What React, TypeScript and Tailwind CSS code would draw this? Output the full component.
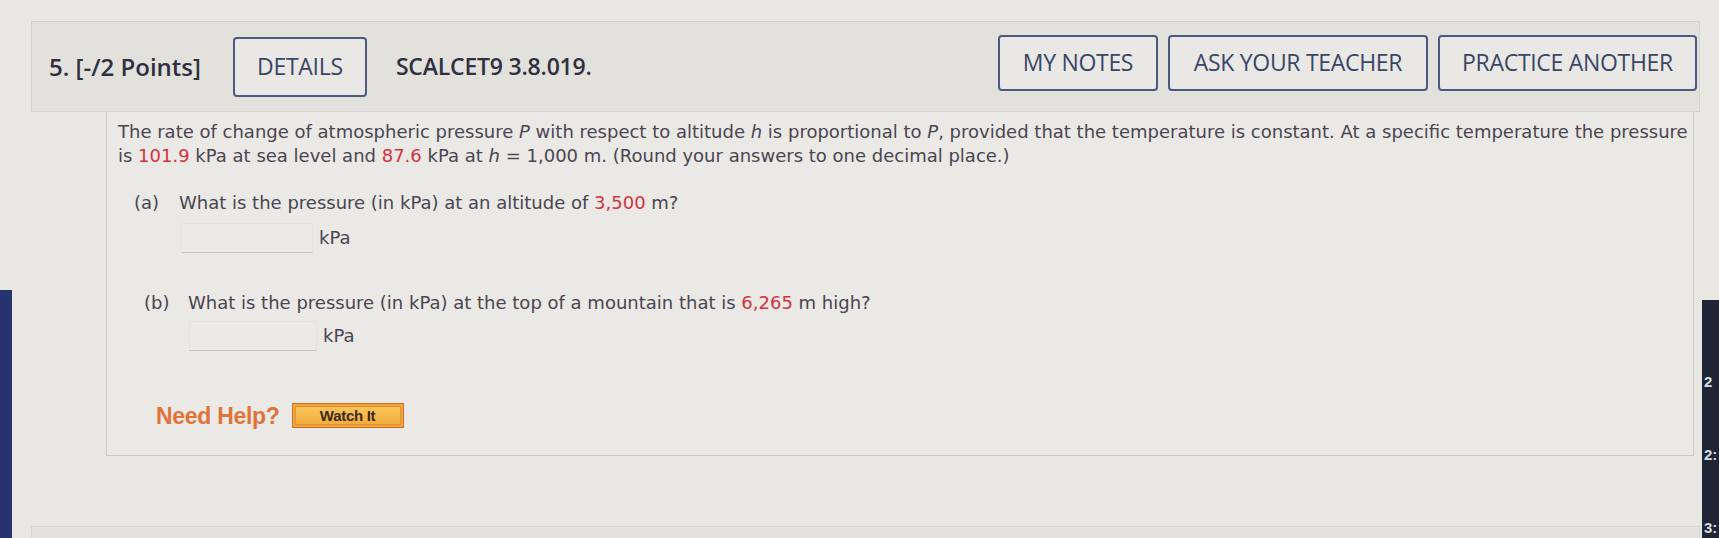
import React from 'react';

const red = 'text-[#d2333f]';

function OutlineButton({ label, className }: { label: string; className: string }) {
  return (
    <div
      className={`flex items-center justify-center rounded-[4px] border-2 border-[#4d5a80] bg-[#e9e8e5] text-[23px] tracking-[-0.3px] text-[#3a4666] ${className}`}
    >
      {label}
    </div>
  );
}

function AnswerRow({ pl, boxW, gap }: { pl: string; boxW: string; gap: string }) {
  return (
    <div className={`flex items-center ${pl} ${gap}`}>
      <div className={`h-[30px] ${boxW} border border-[#e4e3df] border-b-[#c6c5c1] bg-[#ebeae6]`} />
      <span>kPa</span>
    </div>
  );
}

export default function App() {
  return (
    <div className="flex h-[538px] w-[1719px] overflow-hidden bg-[#e9e7e2] font-['DejaVu_Sans',sans-serif]">
      {/* left edge of the monitor */}
      <div className="flex w-[12px] shrink-0 flex-col">
        <div className="h-[290px]" />
        <div className="flex-1 bg-[#26336e]" />
      </div>

      <div className="flex w-[1690px] shrink-0 flex-col pt-[21px] pl-[19px]">
        {/* header band */}
        <div className="flex h-[91px] w-[1669px] shrink-0 items-center border border-[#d3d2ce] bg-[#e2e1dc] pr-[2px] font-['Open_Sans',sans-serif] text-[#2f3040]">
          <span className="ml-[17px] text-[24px] font-semibold">5. [-/2 Points]</span>
          <OutlineButton label="DETAILS" className="ml-[32px] h-[60px] w-[134px]" />
          <span className="ml-[29px] text-[23px] font-semibold tracking-[-0.2px]">SCALCET9 3.8.019.</span>
          <div className="flex-1" />
          <div className="flex gap-[10px] pb-[8px]">
            <OutlineButton label="MY NOTES" className="h-[56px] w-[160px]" />
            <OutlineButton label="ASK YOUR TEACHER" className="h-[56px] w-[260px]" />
            <OutlineButton label="PRACTICE ANOTHER" className="h-[56px] w-[259px]" />
          </div>
        </div>

        {/* question panel */}
        <div className="ml-[75px] flex h-[344px] w-[1588px] shrink-0 flex-col border border-t-0 border-[#c9c8c4] bg-[#eae9e5] pt-[8px] pl-[11px] text-[18px] leading-[24px] text-[#4b4551]">
          <p className="whitespace-nowrap">
            The rate of change of atmospheric pressure <i>P</i> with respect to altitude <i>h</i> is proportional
            to <i>P</i>, provided that the temperature is constant. At a specific temperature the pressure
            <br />
            is <span className={red}>101.9</span> kPa at sea level and <span className={red}>87.6</span> kPa at{' '}
            <i>h</i> = 1,000 m. (Round your answers to one decimal place.)
          </p>

          <div className="mt-[23px] flex pl-[16px]">
            <span className="w-[45px]">(a)</span>
            <span>
              What is the pressure (in kPa) at an altitude of <span className={red}>3,500</span> m?
            </span>
          </div>
          <div className="mt-[8px]">
            <AnswerRow pl="pl-[63px]" boxW="w-[132px]" gap="gap-[6px]" />
          </div>

          <div className="mt-[38px] flex pl-[26px]">
            <span className="w-[44px]">(b)</span>
            <span>
              What is the pressure (in kPa) at the top of a mountain that is <span className={red}>6,265</span> m
              high?
            </span>
          </div>
          <div className="mt-[6px]">
            <AnswerRow pl="pl-[71px]" boxW="w-[128px]" gap="gap-[6px]" />
          </div>

          <div className="mt-[52px] flex items-center gap-[12px] pl-[38px] font-['Liberation_Sans',sans-serif]">
            <span className="text-[23px] font-bold tracking-[-0.3px] text-[#e07338]">Need Help?</span>
            <div className="border border-[#c9701f] bg-[#f2a640] p-[2px]">
              <div className="flex h-[19px] w-[106px] items-center justify-center border border-[#e48f2e] bg-gradient-to-b from-[#f9c55a] to-[#f3ad3f] text-[15px] font-bold tracking-[-0.3px] text-[#3b2a1a]">
                Watch It
              </div>
            </div>
          </div>
        </div>

        {/* top of the next question, cut off by the photo */}
        <div className="mt-[70px] h-[20px] w-[1669px] shrink-0 border border-[#d6d4cf] bg-[#e4e2dd]" />
      </div>

      {/* right edge: another window behind */}
      <div className="flex flex-1 flex-col">
        <div className="h-[300px]" />
        <div className="flex flex-1 flex-col gap-[53px] bg-[#1f2535] pt-[72px] pl-[2px] font-['Liberation_Sans',sans-serif] text-[15px] font-bold leading-[20px] text-[#d8dbe4]">
          <span>2</span>
          <span>2:</span>
          <span>3:</span>
        </div>
      </div>
    </div>
  );
}
